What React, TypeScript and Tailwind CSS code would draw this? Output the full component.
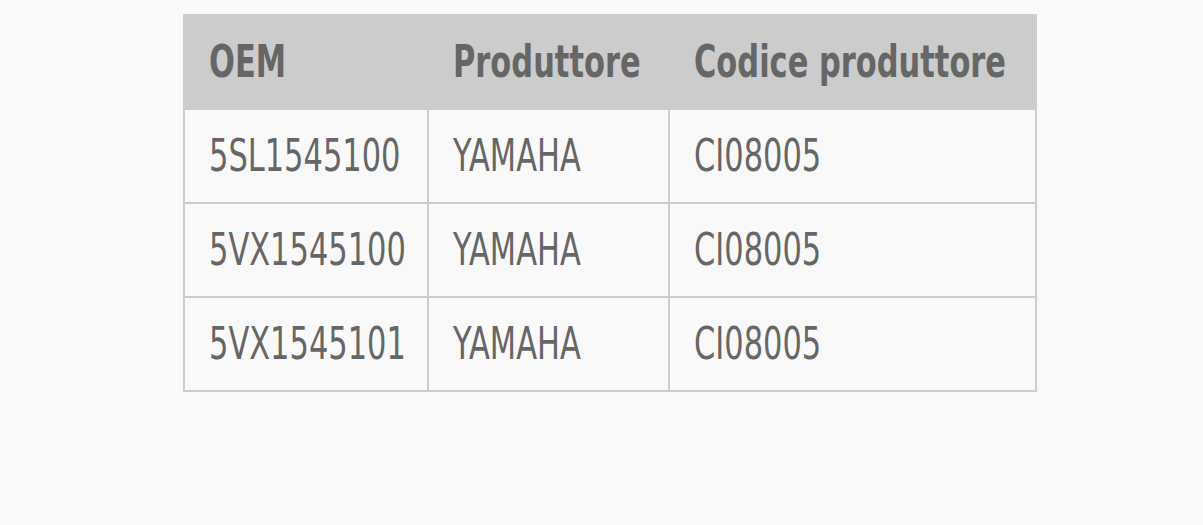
const rows = [
  ["5SL1545100", "YAMAHA", "CI08005"],
  ["5VX1545100", "YAMAHA", "CI08005"],
  ["5VX1545101", "YAMAHA", "CI08005"],
];

const font = { fontFamily: '"DejaVu Sans Condensed", "DejaVu Sans", sans-serif' };

// the original face is a narrow grotesque; squeeze DejaVu to match its widths
function Narrow({ children }: { children: string }) {
  return <span className="inline-block origin-left scale-x-[0.77] whitespace-nowrap">{children}</span>;
}

export default function App() {
  return (
    <div className="min-h-[525px] w-full bg-[#f9f9f9] pt-[14px] pl-[183px]" style={font}>
      <table className="table-fixed w-[852px] border-collapse text-[#666] text-[44px] leading-none">
        <thead>
          <tr className="h-[94px] bg-[#cccccc]">
            <th className="w-[244px] border-2 border-[#cccccc] pl-[24px] text-left font-bold">
              <Narrow>OEM</Narrow>
            </th>
            <th className="w-[241px] border-2 border-[#cccccc] pl-[24px] text-left font-bold">
              <Narrow>Produttore</Narrow>
            </th>
            <th className="w-[367px] border-2 border-[#cccccc] pl-[24px] text-left font-bold">
              <Narrow>Codice produttore</Narrow>
            </th>
          </tr>
        </thead>
        <tbody>
          {rows.map((r) => (
            <tr key={r[0]} className="h-[94px]">
              {r.map((c, i) => (
                <td key={i} className="border-2 border-[#cccccc] pl-[24px] text-left">
                  <Narrow>{c}</Narrow>
                </td>
              ))}
            </tr>
          ))}
        </tbody>
      </table>
    </div>
  );
}
